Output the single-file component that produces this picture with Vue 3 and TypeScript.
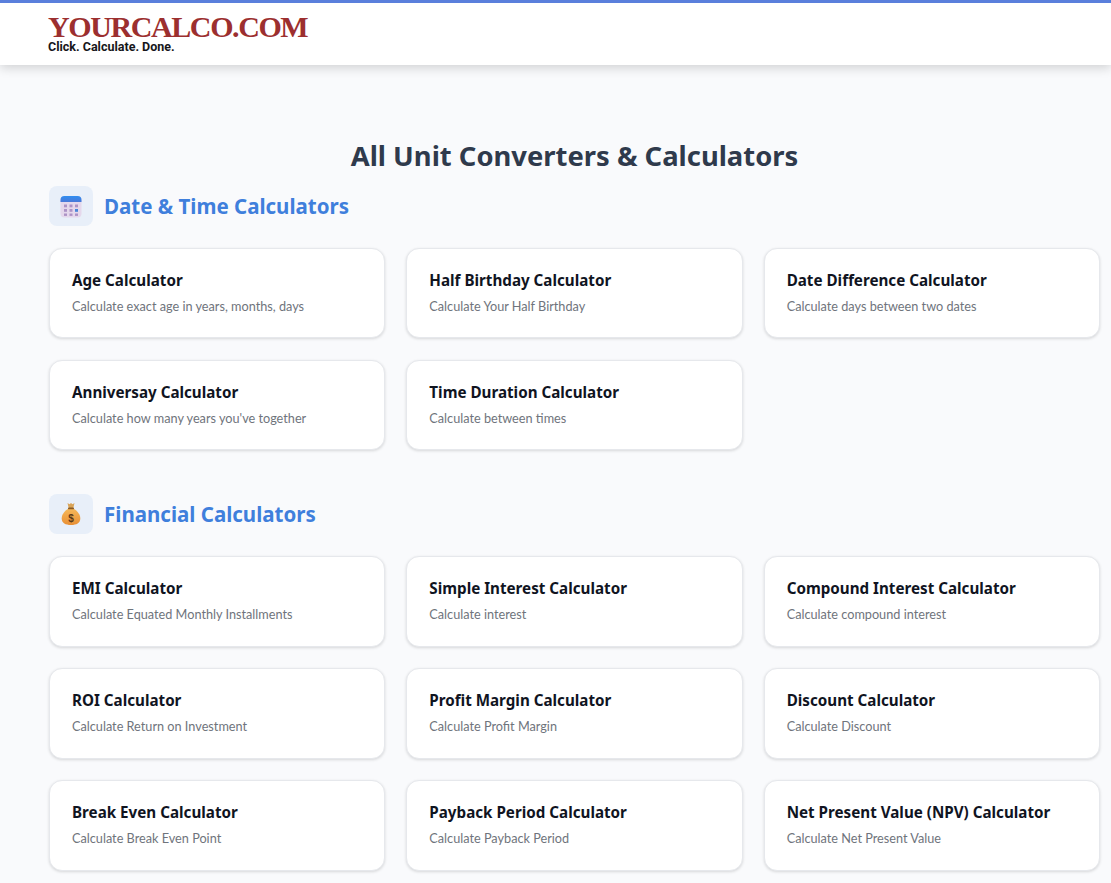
<script setup lang="ts">
interface Calc {
  title: string;
  desc: string;
}

const dateCalcs: Calc[] = [
  { title: 'Age Calculator', desc: 'Calculate exact age in years, months, days' },
  { title: 'Half Birthday Calculator', desc: 'Calculate Your Half Birthday' },
  { title: 'Date Difference Calculator', desc: 'Calculate days between two dates' },
  { title: 'Anniversay Calculator', desc: "Calculate how many years you've together" },
  { title: 'Time Duration Calculator', desc: 'Calculate between times' },
];

const financeCalcs: Calc[] = [
  { title: 'EMI Calculator', desc: 'Calculate Equated Monthly Installments' },
  { title: 'Simple Interest Calculator', desc: 'Calculate interest' },
  { title: 'Compound Interest Calculator', desc: 'Calculate compound interest' },
  { title: 'ROI Calculator', desc: 'Calculate Return on Investment' },
  { title: 'Profit Margin Calculator', desc: 'Calculate Profit Margin' },
  { title: 'Discount Calculator', desc: 'Calculate Discount' },
  { title: 'Break Even Calculator', desc: 'Calculate Break Even Point' },
  { title: 'Payback Period Calculator', desc: 'Calculate Payback Period' },
  { title: 'Net Present Value (NPV) Calculator', desc: 'Calculate Net Present Value' },
];
</script>

<template>
  <div class="page">
    <header class="site-header">
      <div class="logo">YOURCALCO.COM</div>
      <div class="tagline">Click. Calculate. Done.</div>
    </header>

    <main class="content">
      <h1 class="page-title">All Unit Converters &amp; Calculators</h1>

      <section class="category">
        <div class="category-head">
          <span class="category-icon">
            <svg width="22" height="23" viewBox="0 0 22 23">
              <defs>
                <linearGradient id="cal-top" x1="0" y1="0" x2="0" y2="1">
                  <stop offset="0" stop-color="#2f8df0" />
                  <stop offset="1" stop-color="#4a78d8" />
                </linearGradient>
              </defs>
              <rect x="0.5" y="1" width="21" height="21.500" rx="4" fill="#e5d8ec" />
              <path d="M0.500 7V5a4 4 0 0 1 4-4h13a4 4 0 0 1 4 4v2z" fill="url(#cal-top)" />
              <g fill="#ad93c6">
                <rect x="4" y="9.500" width="3" height="2.800" />
                <rect x="9.500" y="9.500" width="3" height="2.800" />
                <rect x="15" y="9.500" width="3" height="2.800" />
                <rect x="4" y="14" width="3" height="2.800" />
                <rect x="9.500" y="14" width="3" height="2.800" />
                <rect x="15" y="14" width="3" height="2.800" fill="#4a86d8" />
                <rect x="4" y="18.500" width="3" height="2.400" />
                <rect x="9.500" y="18.500" width="3" height="2.400" />
                <rect x="15" y="18.500" width="3" height="2.400" />
              </g>
            </svg>
          </span>
          <h2 class="category-title">Date &amp; Time Calculators</h2>
        </div>
        <div class="card-grid">
          <a v-for="calc in dateCalcs" :key="calc.title" class="card">
            <h3 class="card-title">{{ calc.title }}</h3>
            <p class="card-desc">{{ calc.desc }}</p>
          </a>
        </div>
      </section>

      <section class="category">
        <div class="category-head">
          <span class="category-icon">
            <svg width="20" height="24" viewBox="0 0 20 24">
              <defs>
                <linearGradient id="bag-fill" x1="0" y1="0" x2="0" y2="1">
                  <stop offset="0" stop-color="#f6b95a" />
                  <stop offset="1" stop-color="#e88f35" />
                </linearGradient>
              </defs>
              <path d="M6.500 1l2 1.200L10 1l1.500 1.200 2-1.200-1.200 5H7.700z" fill="#d9a458" />
              <path d="M7.500 6.500h5c4 2.500 6.800 6 6.800 10 0 4.500-3.800 6.500-9.300 6.500S.7 21 .7 16.500c0-4 2.800-7.500 6.800-10z" fill="url(#bag-fill)" />
              <rect x="7" y="5.500" width="6" height="1.800" rx="0.900" fill="#8a5a24" />
              <text x="10" y="20" text-anchor="middle" class="bag-sign">$</text>
            </svg>
          </span>
          <h2 class="category-title">Financial Calculators</h2>
        </div>
        <div class="card-grid">
          <a v-for="calc in financeCalcs" :key="calc.title" class="card">
            <h3 class="card-title">{{ calc.title }}</h3>
            <p class="card-desc">{{ calc.desc }}</p>
          </a>
        </div>
      </section>
    </main>
  </div>
</template>

<style>
html,
body {
  margin: 0;
  height: 883px;
  overflow: hidden;
  background: #f9fafc;
}
</style>

<style scoped>
.page {
  font-family: "Noto Sans", "Open Sans", sans-serif;
  background: #f9fafc;
}

.site-header {
  height: 62px;
  padding-left: 48px;
  background: #fff;
  border-top: 3px solid #5a7fdc;
  box-shadow: 0 3px 10px rgba(0, 0, 0, 0.16);
  position: relative;
}

.logo {
  padding-top: 10px;
  margin-bottom: -1px;
  font-family: "Liberation Serif", serif;
  font-weight: 700;
  font-size: 30px;
  line-height: 28px;
  letter-spacing: -1.4px;
  color: #9c2f2f;
}

.tagline {
  font-family: Roboto, sans-serif;
  font-weight: 700;
  font-size: 12.500px;
  line-height: 14px;
  color: #16161a;
}

.content {
  padding: 71px 11px 0 49px;
}

.page-title {
  margin: 0;
  font-size: 27.400px;
  line-height: 39px;
  font-weight: 700;
  text-align: center;
  color: #2f3a4c;
}

.category {
  margin-bottom: 44px;
}

.category-head {
  display: flex;
  align-items: center;
  gap: 11px;
  margin: 11px 0 22px;
}

.category-icon {
  display: flex;
  align-items: center;
  justify-content: center;
  width: 44px;
  height: 40px;
  border-radius: 8px;
  background: #e8eff9;
}

.category-title {
  margin: 0;
  font-size: 20.500px;
  line-height: 40px;
  font-weight: 700;
  color: #3f7fdc;
  align-self: flex-start;
}

.card-grid {
  display: grid;
  grid-template-columns: repeat(3, 1fr);
  gap: 21.600px 21px;
}

.card {
  box-sizing: border-box;
  height: 90.400px;
  padding: 21px 22px;
  background: #fff;
  border: 1px solid #e6e8ec;
  border-radius: 13px;
  box-shadow: 0 1px 3px rgba(0, 0, 0, 0.14);
}

.card-title {
  margin: 0 0 7px;
  font-size: 15.200px;
  line-height: 20px;
  font-weight: 700;
  color: #10141f;
}

.card-desc {
  margin: 0;
  font-family: Lato, "Noto Sans", sans-serif;
  font-size: 12.700px;
  line-height: 18px;
  color: #6f747c;
}

.bag-sign {
  font-family: "Liberation Sans", sans-serif;
  font-size: 10px;
  font-weight: 700;
  fill: #5a3a18;
}
</style>
